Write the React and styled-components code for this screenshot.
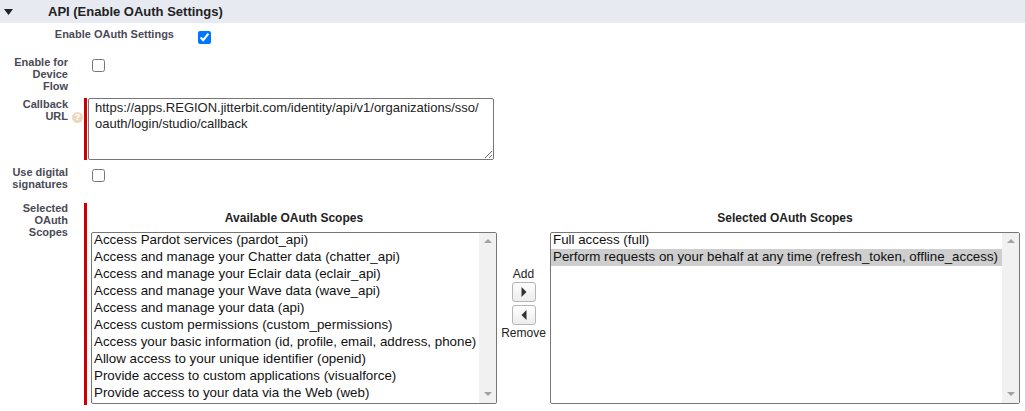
import styled, { createGlobalStyle } from "styled-components";

const availableScopes = [
  "Access Pardot services (pardot_api)",
  "Access and manage your Chatter data (chatter_api)",
  "Access and manage your Eclair data (eclair_api)",
  "Access and manage your Wave data (wave_api)",
  "Access and manage your data (api)",
  "Access custom permissions (custom_permissions)",
  "Access your basic information (id, profile, email, address, phone)",
  "Allow access to your unique identifier (openid)",
  "Provide access to custom applications (visualforce)",
  "Provide access to your data via the Web (web)",
];

const selectedScopes = [
  "Full access (full)",
  "Perform requests on your behalf at any time (refresh_token, offline_access)",
];

const GlobalStyle = createGlobalStyle`
  html, body {
    margin: 0;
    padding: 0;
    background: #fff;
    font-family: "Liberation Sans", Arial, sans-serif;
    overflow: hidden;
  }
`;

const Page = styled.div`
  width: 1025px;
  height: 411px;
  overflow: hidden;
`;

const SectionHeader = styled.div`
  display: flex;
  align-items: center;
  height: 23px;
  background: #e8eaf2;
  padding-left: 4px;
`;

const Title = styled.h3`
  margin: 0 0 0 35px;
  font-size: 13px;
  font-weight: bold;
  color: #222;
`;

const Row = styled.div`
  display: flex;
  align-items: flex-start;
  margin-top: ${(p) => p.$top}px;
`;

const Label = styled.label`
  flex: none;
  box-sizing: border-box;
  width: ${(p) => p.$width || 68}px;
  margin-top: ${(p) => p.$offset || 0}px;
  padding-left: 10px;
  text-align: right;
  font-size: 11px;
  font-weight: bold;
  line-height: 12px;
  color: #4a4a56;
`;

const Check = styled.input.attrs({ type: "checkbox" })`
  flex: none;
  width: 13px;
  height: 13px;
  margin: ${(p) => p.$top || 0}px 0 0 24px;
`;

const Required = styled.div`
  display: flex;
  align-items: flex-start;
  margin-left: ${(p) => p.$gap}px;
  border-left: 3px solid #c00;
  height: ${(p) => p.$height}px;
`;

const UrlBox = styled.textarea`
  box-sizing: border-box;
  display: block;
  width: 406px;
  height: 62px;
  margin: 0 0 0 1px;
  padding: 1px 10px 2px 6px;
  border: 1px solid #767676;
  border-radius: 2px;
  font-family: "Liberation Sans", Arial, sans-serif;
  font-size: 13px;
  line-height: 16px;
  color: #222;
  outline: none;
  overflow: hidden;
`;

const HintDot = styled.span`
  flex: none;
  display: flex;
  align-items: center;
  justify-content: center;
  width: 11px;
  height: 11px;
  margin: 14px 0 0 4px;
  border-radius: 50%;
  background: #eed9bf;
  color: #fff;
  font-size: 9px;
  font-weight: bold;
  line-height: 11px;
`;

const ScopePicker = styled.div`
  display: flex;
  align-items: flex-start;
  padding-left: 4px;
`;

const ScopeColumn = styled.div`
  display: flex;
  flex-direction: column;
  width: ${(p) => p.$width}px;
`;

const ColumnTitle = styled.div`
  height: 29px;
  padding-top: 8px;
  box-sizing: border-box;
  text-align: center;
  font-size: 12px;
  font-weight: bold;
  line-height: 14px;
  color: #222;
`;

const ListBox = styled.div`
  display: flex;
  box-sizing: border-box;
  height: 172px;
  border: 1px solid #767676;
  border-radius: 2px;
  overflow: hidden;
`;

const Options = styled.div`
  flex: 1;
  min-width: 0;
  margin-top: -1px;
`;

const Option = styled.div`
  height: 17px;
  padding-left: 2px;
  font-size: 13.33px;
  line-height: 16px;
  white-space: nowrap;
  color: #111;
  background: ${(p) => (p.$selected ? "#cecece" : "transparent")};
`;

const Scrollbar = styled.div`
  flex: none;
  display: flex;
  flex-direction: column;
  align-items: center;
  justify-content: space-between;
  width: 17px;
  padding: 6px 0 7px;
  box-sizing: border-box;
  background: #f1f1f1;
`;

const ScrollArrow = styled.span`
  width: 0;
  height: 0;
  border-left: 4px solid transparent;
  border-right: 4px solid transparent;
  ${(p) =>
    p.$up ? "border-bottom: 4px solid #a3a3a3;" : "border-top: 4px solid #a3a3a3;"}
`;

const Mover = styled.div`
  flex: none;
  display: flex;
  flex-direction: column;
  align-items: center;
  width: 53px;
  padding-top: 64px;
  font-size: 12px;
  line-height: 14px;
  color: #222;
`;

const MoveButton = styled.button`
  display: flex;
  align-items: center;
  justify-content: center;
  box-sizing: border-box;
  width: 24px;
  height: 20px;
  margin: ${(p) => p.$margin};
  padding: 0;
  border: 1px solid #b5b5b5;
  border-radius: 3px;
  background: linear-gradient(#fff, #ececec);
`;

const Triangle = ({ dir }) => (
  <svg width="6" height="10" viewBox="0 0 6 10">
    <path d={dir === "right" ? "M0.5 0L5.5 5L0.5 10Z" : "M5.5 0L0.5 5L5.5 10Z"} fill="#333" />
  </svg>
);

const ScopeList = ({ items, selected }) => (
  <ListBox>
    <Options>
      {items.map((item) => (
        <Option key={item} $selected={item === selected}>
          {item}
        </Option>
      ))}
    </Options>
    <Scrollbar>
      <ScrollArrow $up />
      <ScrollArrow />
    </Scrollbar>
  </ListBox>
);

export default function App() {
  return (
    <Page>
      <GlobalStyle />
      <SectionHeader>
        <svg width="9" height="6" viewBox="0 0 9 6">
          <path d="M0 0H9L4.5 6Z" fill="#222" />
        </svg>
        <Title>API (Enable OAuth Settings)</Title>
      </SectionHeader>

      <Row $top={8}>
        <Label $width={174} $offset={-3}>Enable OAuth Settings</Label>
        <Check defaultChecked readOnly />
      </Row>

      <Row $top={12}>
        <Label>Enable for Device Flow</Label>
        <Check $top={3} />
      </Row>

      <Row $top={6}>
        <Label>Callback URL</Label>
        <HintDot>?</HintDot>
        <Required $gap={1} $height={62}>
          <UrlBox
            readOnly
            defaultValue="https://apps.REGION.jitterbit.com/identity/api/v1/organizations/sso/oauth/login/studio/callback"
          />
        </Required>
      </Row>

      <Row $top={6}>
        <Label>Use digital signatures</Label>
        <Check $top={3} />
      </Row>

      <Row $top={13}>
        <Label $offset={-1}>Selected OAuth Scopes</Label>
        <Required $gap={16} $height={202}>
          <ScopePicker>
            <ScopeColumn $width={406}>
              <ColumnTitle>Available OAuth Scopes</ColumnTitle>
              <ScopeList items={availableScopes} />
            </ScopeColumn>
            <Mover>
              Add
              <MoveButton $margin="1px 0 3px" aria-label="Add">
                <Triangle dir="right" />
              </MoveButton>
              <MoveButton $margin="0 0 1px" aria-label="Remove">
                <Triangle dir="left" />
              </MoveButton>
              Remove
            </Mover>
            <ScopeColumn $width={470}>
              <ColumnTitle>Selected OAuth Scopes</ColumnTitle>
              <ScopeList items={selectedScopes} selected={selectedScopes[1]} />
            </ScopeColumn>
          </ScopePicker>
        </Required>
      </Row>
    </Page>
  );
}
